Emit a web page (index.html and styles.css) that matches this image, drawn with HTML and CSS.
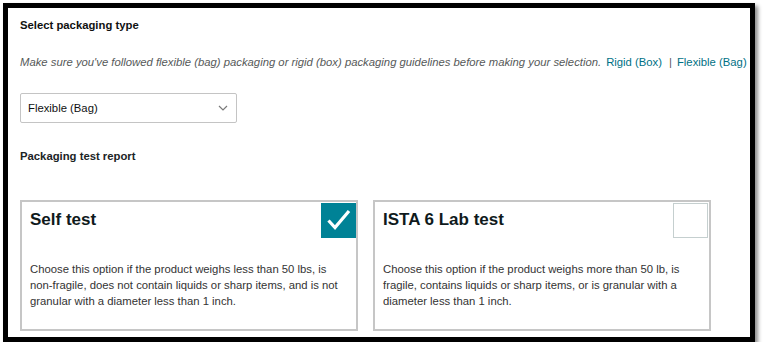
FILE: index.html
```html
<!DOCTYPE html>
<html lang="en">

<head>
    <meta charset="UTF-8">
    <meta name="viewport" content="width=device-width, initial-scale=1.0">
    <title>Packaging type</title>
    <link rel="stylesheet" href="styles.css">
</head>

<body>
    <div class="frame">
        <h2 class="fieldLabel">Select packaging type</h2>
        <p class="hint">Make sure you've followed flexible (bag) packaging or rigid (box) packaging guidelines before making your selection.<a href="#" class="guideLink">Rigid (Box)</a><span class="sep">|</span><a href="#" class="guideLink">Flexible (Bag)</a></p>

        <div class="select">
            <span>Flexible (Bag)</span>
            <svg width="10" height="6" viewBox="0 0 10 6">
                <path d="M1 1 L5 5 L9 1" fill="none" stroke="#7a7a7a" stroke-width="1.2" />
            </svg>
        </div>

        <h3 class="subLabel">Packaging test report</h3>

        <div class="cards">
            <div class="card">
                <div class="cardHead">
                    <div class="cardTitle">Self test</div>
                    <span class="box checked">
                        <svg width="35" height="35" viewBox="0 0 35 35">
                            <path d="M7.5 17.5 L14 24.5 L28 8" fill="none" stroke="#ffffff" stroke-width="3.2" />
                        </svg>
                    </span>
                </div>
                <p class="cardText">Choose this option if the product weighs less than 50 lbs, is non-fragile, does not contain liquids or sharp items, and is not granular with a diameter less than 1 inch.</p>
            </div>
            <div class="card">
                <div class="cardHead">
                    <div class="cardTitle">ISTA 6 Lab test</div>
                    <span class="box"></span>
                </div>
                <p class="cardText">Choose this option if the product weighs more than 50 lb, is fragile, contains liquids or sharp items, or is granular with a diameter less than 1 inch.</p>
            </div>
        </div>
    </div>
</body>
</html>
```

FILE: styles.css
```css
* {
  margin: 0;
  padding: 0;
  box-sizing: border-box;
}

html, body {
  background: #ffffff;
  font-family: "Liberation Sans", Arial, sans-serif;
  font-size: 11.3px;
  line-height: 16px;
  color: #0f1111;
}

body {
  padding: 3px 0 0 3px;
}

.frame {
  width: 752px;
  height: 339px;
  border: 5px solid #000000;
  box-shadow: 3px 3px 4px rgba(0, 0, 0, 0.45);
  padding: 9px 0 0 12px;
  overflow: hidden;
}

.fieldLabel {
  font-size: 11.3px;
  font-weight: bold;
  line-height: 16px;
}

.hint {
  margin-top: 21px;
  font-style: italic;
  color: #565959;
  white-space: nowrap;
}

.guideLink {
  font-style: normal;
  color: #007185;
  text-decoration: none;
  margin-left: 5px;
}

.sep {
  font-style: normal;
  color: #565959;
  margin: 0 5px 0 7px;
}

.sep + .guideLink {
  margin-left: 0;
}

.select {
  margin-top: 23px;
  width: 217px;
  height: 30px;
  border: 1px solid #c4c4c4;
  border-radius: 2px;
  display: flex;
  align-items: center;
  justify-content: space-between;
  padding: 0 8px 0 7px;
  color: #0f1111;
}

.subLabel {
  margin-top: 25px;
  font-size: 11.3px;
  font-weight: bold;
  line-height: 16px;
  color: #1b2426;
}

.cards {
  margin-top: 36px;
  display: flex;
  gap: 15px;
}

.card {
  width: 338px;
  border: 2px solid #c6c6c6;
  padding: 1px 0 20px 8px;
}

.cardHead {
  display: flex;
  justify-content: space-between;
  align-items: flex-start;
}

.cardTitle {
  margin-top: 6px;
  font-size: 17px;
  font-weight: bold;
  line-height: 22px;
  color: #0f1a1c;
}

.box {
  width: 35px;
  height: 35px;
  border: 1.5px solid #c5cfcf;
  background: #ffffff;
  margin-right: 1px;
}

.box.checked {
  border: none;
  background: #008296;
  margin-right: 0;
}

.box svg {
  display: block;
}

.cardText {
  margin-top: 23px;
  padding-right: 10px;
  color: #333333;
}
```
